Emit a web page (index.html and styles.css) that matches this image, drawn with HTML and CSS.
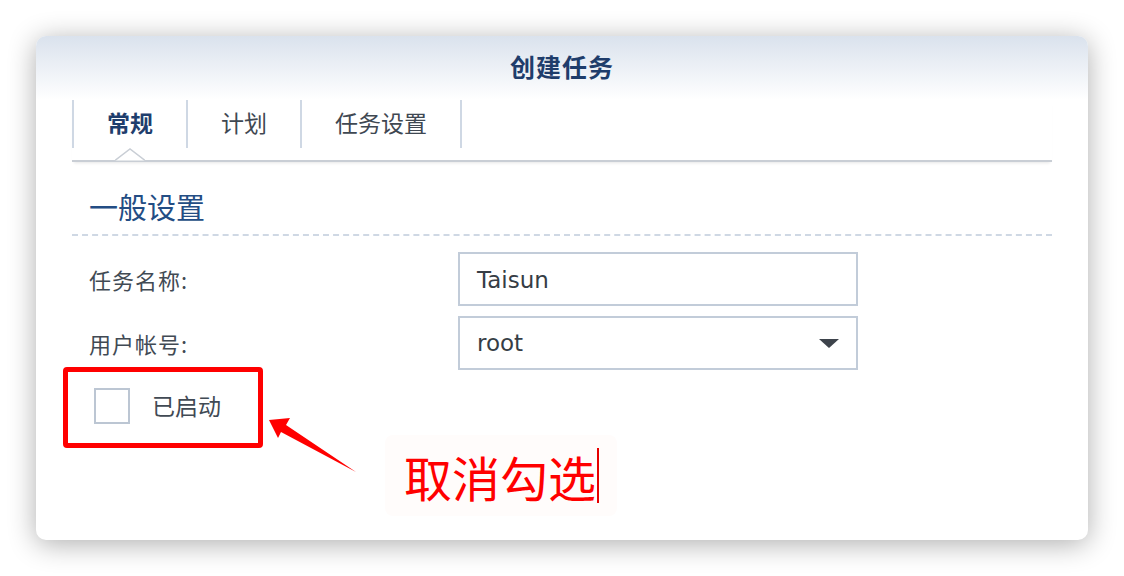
FILE: index.html
```html
<!DOCTYPE html>
<html lang="zh-CN">
<head>
<meta charset="utf-8">
<title>创建任务</title>
<link rel="stylesheet" href="styles.css">
</head>
<body>
<div class="stage">
  <div class="window">
    <div class="header">创建任务</div>
    <div class="tabbar">
      <div class="tab active">常规</div>
      <div class="tab">计划</div>
      <div class="tab">任务设置</div>
      <svg class="caret" width="30" height="14" viewBox="0 0 30 14"><polyline points="0,12.5 15,1 30,12.5" fill="#fff" stroke="#c9ced5" stroke-width="1.5"/></svg>
    </div>
    <div class="section">一般设置</div>
    <div class="form">
      <div class="row">
        <div class="label">任务名称:</div>
        <div class="field">Taisun</div>
      </div>
      <div class="row">
        <div class="label">用户帐号:</div>
        <div class="field select">root<span class="tri"></span></div>
      </div>
      <div class="check-row">
        <span class="checkbox"></span>
        <span class="check-label">已启动</span>
      </div>
    </div>
  </div>

  <div class="mark-box"></div>
  <svg class="arrow" width="1124" height="576" viewBox="0 0 1124 576">
    <polygon points="269,420 290,418 286,425 356,472 281,432 278,438" fill="#ff0000"/>
  </svg>
  <div class="note">取消勾选<span class="cursor"></span></div>
</div>
</body>
</html>
```

FILE: styles.css
```css
html, body {
  margin: 0;
  padding: 0;
  background: #ffffff;
}

.stage {
  position: relative;
  width: 1124px;
  height: 576px;
  padding: 36px;
  box-sizing: border-box;
  font-family: "Noto Sans CJK SC", "DejaVu Sans", sans-serif;
}

.window {
  width: 1052px;
  height: 504px;
  background: #ffffff;
  border-radius: 10px;
  box-shadow: 0 4px 28px rgba(0, 0, 0, 0.32);
  overflow: hidden;
  display: flex;
  flex-direction: column;
}

.header {
  height: 64px;
  box-sizing: border-box;
  padding-top: 15px;
  text-align: center;
  font-size: 25px;
  line-height: 30px;
  font-weight: 700;
  letter-spacing: 1px;
  color: #1f3d6b;
  background: linear-gradient(to bottom, #dae2ed 0%, #ffffff 100%);
}

.tabbar {
  position: relative;
  margin: 0 36px;
  height: 60px;
  display: flex;
  align-items: flex-start;
  border-bottom: 2px solid #c9ced5;
  box-shadow: 0 3px 3px -2px rgba(0, 0, 0, 0.1);
}

.tab {
  height: 48px;
  box-sizing: border-box;
  padding: 0 33px 4px;
  display: flex;
  align-items: center;
  justify-content: center;
  font-size: 23px;
  color: #3f4852;
  border-right: 2px solid #cfd8e4;
}

.tab:first-child {
  border-left: 2px solid #cfd8e4;
}

.tab.active {
  font-weight: 700;
  color: #1f3e6d;
}

.caret {
  position: absolute;
  left: 43px;
  bottom: -2px;
}

.section {
  margin: 0 36px;
  padding: 24px 0 0 17px;
  height: 74px;
  box-sizing: border-box;
  font-size: 29px;
  line-height: 40px;
  color: #234d84;
  border-bottom: 2px dashed #cfd8e4;
}

.form {
  padding: 16px 0 0 53px;
  display: flex;
  flex-direction: column;
  gap: 10px;
}

.row {
  display: flex;
  align-items: center;
  height: 54px;
}

.label {
  width: 369px;
  font-size: 22px;
  letter-spacing: 1px;
  color: #414a54;
}

.field {
  width: 400px;
  height: 54px;
  box-sizing: border-box;
  border: 2px solid #c2ccd9;
  padding: 2px 17px 0;
  display: flex;
  align-items: center;
  font-family: "DejaVu Sans", "Noto Sans CJK SC", sans-serif;
  font-size: 23px;
  color: #363d45;
}

.select {
  justify-content: space-between;
  padding-top: 0;
}

.tri {
  width: 0;
  height: 0;
  border-left: 10px solid transparent;
  border-right: 10px solid transparent;
  border-top: 9px solid #3d434b;
}

.check-row {
  display: flex;
  align-items: center;
  height: 50px;
  margin-top: 1px;
  padding-left: 5px;
}

.checkbox {
  width: 36px;
  height: 36px;
  box-sizing: border-box;
  border: 2px solid #bcc6d3;
  background: #fff;
}

.check-label {
  margin-left: 22px;
  margin-bottom: 2px;
  font-size: 23px;
  color: #414a54;
}

.mark-box {
  position: absolute;
  left: 63px;
  top: 367px;
  width: 200px;
  height: 81px;
  box-sizing: border-box;
  border: 5px solid #ff0000;
  border-radius: 4px;
}

.arrow {
  position: absolute;
  left: 0;
  top: 0;
  pointer-events: none;
}

.note {
  position: absolute;
  left: 385px;
  top: 435px;
  width: 232px;
  height: 81px;
  box-sizing: border-box;
  padding-left: 19px;
  display: flex;
  align-items: center;
  background: #fffcfb;
  border-radius: 8px;
  font-size: 48px;
  line-height: 1;
  color: #ff0000;
}

.cursor {
  display: inline-block;
  width: 2px;
  height: 55px;
  margin-left: 1px;
  background: #e60000;
}
```
